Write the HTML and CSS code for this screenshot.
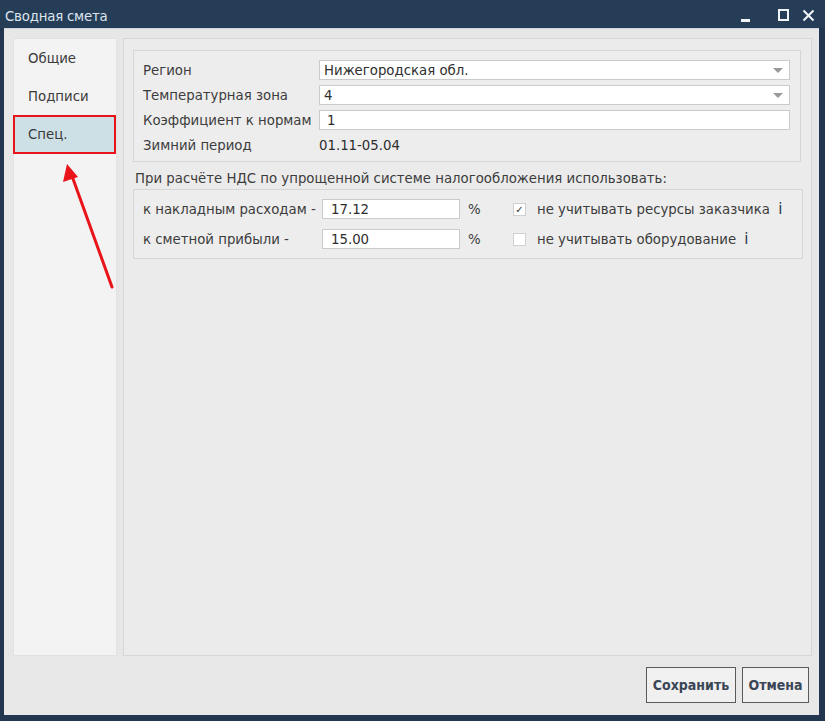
FILE: index.html
```html
<!DOCTYPE html>
<html lang="ru">
<head>
<meta charset="utf-8">
<title>Сводная смета</title>
<link rel="stylesheet" href="styles.css">
</head>
<body>
<div class="window">
  <div class="titlebar">
    <span class="title">Сводная смета</span>
    <div class="controls">
      <span class="ctl ctl-min"></span>
      <span class="ctl ctl-max"></span>
      <svg class="ctl-close" width="13" height="13" viewBox="0 0 13 13"><path d="M1.5 1.5 L11.5 11.5 M11.5 1.5 L1.5 11.5" stroke="#f2f5f8" stroke-width="2" fill="none"/></svg>
    </div>
  </div>
  <div class="body">
    <div class="panes">
      <nav class="nav">
        <div class="nav-item">Общие</div>
        <div class="nav-item">Подписи</div>
        <div class="nav-item active">Спец.</div>
      </nav>
      <main class="main">
        <section class="group group-main">
          <div class="label">Регион</div>
          <div class="field select">Нижегородская обл.<span class="caret"></span></div>
          <div class="label">Температурная зона</div>
          <div class="field select">4<span class="caret"></span></div>
          <div class="label">Коэффициент к нормам</div>
          <div class="field input">1</div>
          <div class="label">Зимний период</div>
          <div class="value">01.11-05.04</div>
        </section>
        <div class="group-title">При расчёте НДС по упрощенной системе налогообложения использовать:</div>
        <section class="group group-nds">
          <div class="label">к накладным расходам -</div>
          <div class="field input num">17.12</div>
          <div class="pct">%</div>
          <div class="check checked">✓</div>
          <div class="check-label">не учитывать ресурсы заказчика <span class="info">i</span></div>

          <div class="label">к сметной прибыли -</div>
          <div class="field input num">15.00</div>
          <div class="pct">%</div>
          <div class="check"></div>
          <div class="check-label">не учитывать оборудование <span class="info">i</span></div>
        </section>
      </main>
    </div>
    <div class="footer">
      <button class="btn">Сохранить</button>
      <button class="btn">Отмена</button>
    </div>
  </div>
  <svg class="arrow" width="825" height="721" viewBox="0 0 825 721">
    <line x1="112" y1="287" x2="72" y2="176" stroke="#e8141a" stroke-width="3" stroke-linecap="round"/>
    <polygon points="67,164 63,182 78,177" fill="#e8141a"/>
  </svg>
</div>
</body>
</html>
```

FILE: styles.css
```css
* { box-sizing: border-box; }
html, body { margin: 0; padding: 0; }
body {
  width: 825px;
  height: 721px;
  overflow: hidden;
  background: #1e2f45;
  font-family: "DejaVu Sans", Verdana, sans-serif;
  font-size: 13.3px;
  color: #3a3a3a;
}
.window {
  position: relative;
  width: 825px;
  height: 721px;
  background: #223650;
  display: flex;
  flex-direction: column;
}
.titlebar {
  height: 28px;
  flex: 0 0 28px;
  display: flex;
  align-items: center;
  padding: 2px 10px 0 5px;
  background: #263d58;
}
.title {
  font-family: "DejaVu Sans Condensed", "DejaVu Sans", sans-serif;
  font-size: 14.8px;
  color: #dde5ee;
  letter-spacing: -0.2px;
}
.controls {
  margin-left: auto;
  display: flex;
  align-items: center;
}
.ctl-min {
  width: 9px;
  height: 3px;
  background: #f2f5f8;
  margin-top: 10px;
  margin-right: 28px;
}
.ctl-max {
  width: 11px;
  height: 12px;
  border: 2px solid #f2f5f8;
  margin-right: 13px;
}
.ctl-close { display: block; }
.body {
  flex: 1;
  margin: 0 6px 6px 4px;
  background: #e7e7e7;
  padding: 9px 7px 0 9px;
  display: flex;
  flex-direction: column;
  border-top: 1px solid #cfd6dd;
}
.panes {
  height: 618px;
  display: flex;
  gap: 6px;
}
.nav {
  width: 104px;
  background: #f3f3f3;
  border: 1px solid #e2e2e2;
  padding-top: 0;
}
.nav-item {
  height: 38px;
  display: flex;
  align-items: center;
  padding-left: 14px;
  color: #3a3a3a;
}
.nav-item.active {
  background: #cde0e6;
  border: 2px solid #e8141a;
  padding-left: 13px;
  margin-left: -1px;
  height: 39px;
}
.main {
  flex: 1;
  background: #ebebeb;
  border: 1px solid #d7d7d7;
  padding: 11px 10px 0 9px;
}
.group {
  border: 1px solid #d6d6d6;
  background: #ededed;
  display: grid;
  align-items: center;
}
.group-main {
  grid-template-columns: 176px 1fr;
  grid-auto-rows: 20px;
  row-gap: 5px;
  padding: 9px 10px 6px 9px;
}
.label { white-space: nowrap; color: #3c3c3c; }
.field {
  height: 20px;
  background: #fff;
  border: 1px solid #cbcbcb;
  display: flex;
  align-items: center;
  color: #2e2e2e;
  position: relative;
}
.select { padding-left: 4px; }
.input { padding-left: 7px; }
.caret {
  position: absolute;
  right: 6px;
  top: 7px;
  width: 0;
  height: 0;
  border-left: 5px solid transparent;
  border-right: 5px solid transparent;
  border-top: 5px solid #9a9a9a;
}
.value { color: #2e2e2e; }
.group-title {
  margin: 7px 0 0 2px;
  height: 20px;
  line-height: 20px;
  white-space: nowrap;
  color: #3c3c3c;
}
.group-nds {
  grid-template-columns: 179px 138px 53px 24px 1fr;
  grid-auto-rows: 20px;
  row-gap: 10px;
  padding: 9px 10px 9px 9px;
  margin-right: -2px;
}
.num { padding-left: 8px; }
.pct { padding-left: 8px; color: #3c3c3c; }
.check {
  width: 13px;
  height: 13px;
  background: #fff;
  border: 1px solid #d0d0d0;
  font-size: 10px;
  line-height: 11px;
  text-align: center;
  color: #333;
}
.check-label { white-space: nowrap; color: #3c3c3c; }
.info {
  margin-left: 4px;
  font-size: 15px;
  color: #2f3a4a;
}
.footer {
  display: flex;
  justify-content: flex-end;
  gap: 6px;
  margin-top: 11px;
  padding-right: 3px;
}
.btn {
  height: 36px;
  padding: 0 4px;
  background: #f0f0f0;
  border: 1px solid #5a5a5a;
  font-family: "DejaVu Sans Condensed", "DejaVu Sans", sans-serif;
  font-weight: bold;
  font-size: 14px;
  color: #3a4556;
}
.btn:first-child { width: 90px; }
.btn:last-child { width: 67px; }
.arrow {
  position: absolute;
  left: 0;
  top: 0;
  pointer-events: none;
}
```
